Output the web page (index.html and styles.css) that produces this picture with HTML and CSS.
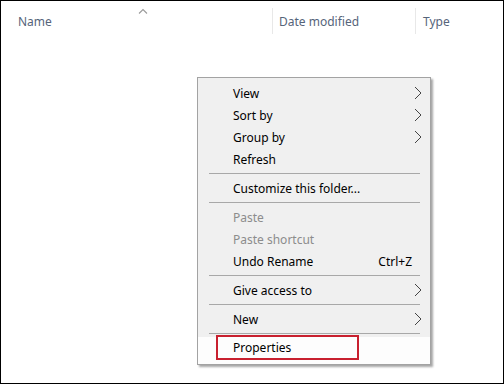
FILE: index.html
```html
<!DOCTYPE html>
<html lang="en">

<head>
    <meta charset="UTF-8">
    <meta name="viewport" content="width=device-width, initial-scale=1.0">
    <title>Folder context menu</title>
    <link rel="stylesheet" href="styles.css">
</head>

<body>
    <div class="window">
        <div class="header">
            <div class="col col-name">
                <span>Name</span>
                <svg class="sort-caret" width="10" height="6" viewBox="0 0 10 6">
                    <path d="M1 5.5 L5 1.5 L9 5.5" fill="none" stroke="#9a9a9a" stroke-width="1.1"/>
                </svg>
            </div>
            <div class="col col-date">Date modified</div>
            <div class="col col-type">Type</div>
        </div>

        <div class="context-menu">
            <div class="item">View
                <svg class="arrow" width="8" height="14" viewBox="0 0 8 14"><path d="M1 1 L7 7 L1 13" fill="none" stroke="#444" stroke-width="1"/></svg>
            </div>
            <div class="item">Sort by
                <svg class="arrow" width="8" height="14" viewBox="0 0 8 14"><path d="M1 1 L7 7 L1 13" fill="none" stroke="#444" stroke-width="1"/></svg>
            </div>
            <div class="item">Group by
                <svg class="arrow" width="8" height="14" viewBox="0 0 8 14"><path d="M1 1 L7 7 L1 13" fill="none" stroke="#444" stroke-width="1"/></svg>
            </div>
            <div class="item">Refresh</div>
            <div class="separator"></div>
            <div class="item">Customize this folder...</div>
            <div class="separator"></div>
            <div class="item disabled">Paste</div>
            <div class="item disabled">Paste shortcut</div>
            <div class="item">Undo Rename <span class="shortcut">Ctrl+Z</span></div>
            <div class="separator"></div>
            <div class="item">Give access to
                <svg class="arrow" width="8" height="14" viewBox="0 0 8 14"><path d="M1 1 L7 7 L1 13" fill="none" stroke="#444" stroke-width="1"/></svg>
            </div>
            <div class="separator"></div>
            <div class="item">New
                <svg class="arrow" width="8" height="14" viewBox="0 0 8 14"><path d="M1 1 L7 7 L1 13" fill="none" stroke="#444" stroke-width="1"/></svg>
            </div>
            <div class="separator"></div>
            <div class="item active"><span class="highlight">Properties</span></div>
        </div>
    </div>
</body>

</html>
```

FILE: styles.css
```css
body {
    margin: 0;
    font-family: "Noto Sans", "Open Sans", sans-serif;
    background: #fff;
}

.window {
    position: relative;
    width: 502px;
    height: 382px;
    border: 1px solid #000;
    background: #fff;
}

.header {
    display: flex;
    height: 33px;
    padding-top: 7px;
    box-sizing: border-box;
    font-size: 12px;
    color: #56647a;
}

.col {
    display: flex;
    align-items: center;
    height: 26px;
}

.col-name {
    position: relative;
    width: 254px;
    padding-left: 17px;
    border-right: 1px solid #e8e8e8;
}

.sort-caret {
    position: absolute;
    left: 137px;
    top: 0;
}

.col-date {
    width: 136px;
    padding-left: 6px;
    border-right: 1px solid #e8e8e8;
}

.col-type {
    padding-left: 7px;
}

.context-menu {
    position: absolute;
    left: 196px;
    top: 76px;
    width: 232px;
    padding: 4px 0 5px 0;
    background: #f0f0f0;
    border: 1px solid #a3a3a3;
    box-shadow: 2px 2px 2px rgba(0, 0, 0, 0.35);
    font-size: 12px;
    color: #000;
}

.item {
    display: flex;
    align-items: center;
    height: 22px;
    padding-left: 35px;
    padding-right: 8px;
    position: relative;
}

.item.disabled {
    color: #8c8c8c;
}

.item.active {
    background: #fdfdfd;
    margin-bottom: -5px;
    height: 27px;
    align-items: flex-start;
}

.highlight {
    display: block;
    margin: -2px 0 0 -17px;
    padding: 1px 0 0 15px;
    width: 124px;
    height: 20px;
    border: 2px solid #c8202f;
    line-height: 19px;
}

.shortcut {
    margin-left: auto;
    padding-right: 10px;
}

.arrow {
    margin-left: auto;
}

.separator {
    height: 1px;
    margin: 3px 10px 3px 11px;
    background: #a8a8a8;
}
```
